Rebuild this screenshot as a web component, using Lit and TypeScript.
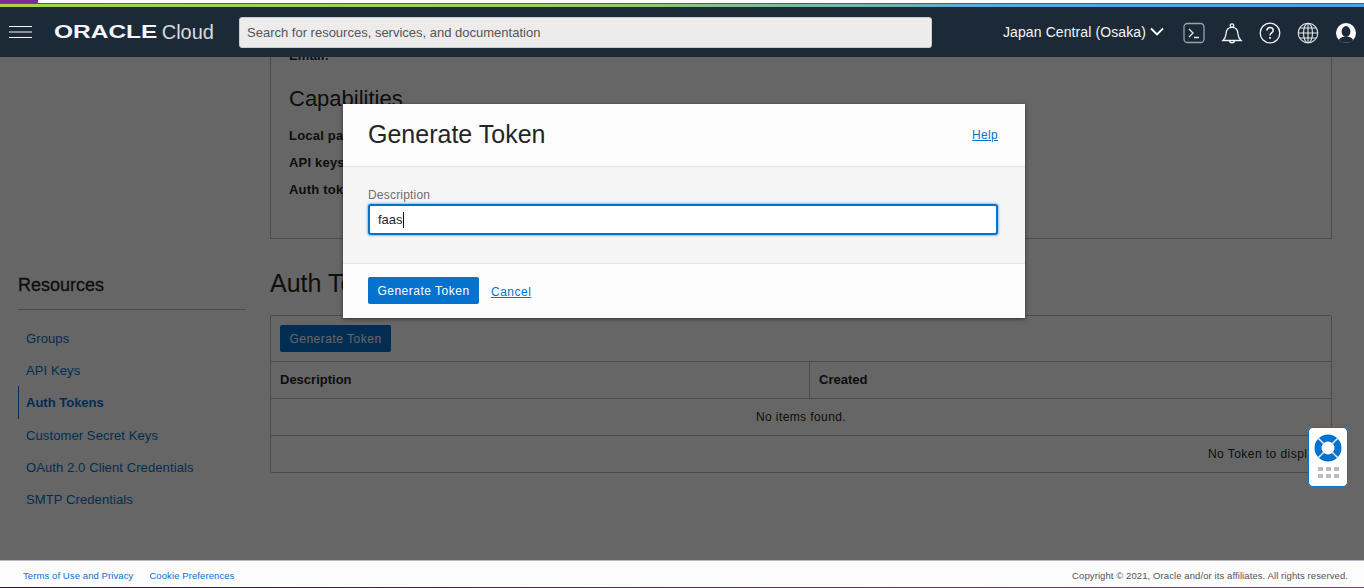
import { css, html, LitElement } from "lit";
import { customElement } from "lit/decorators.js";

const NAV_ITEMS = [
  "Groups",
  "API Keys",
  "Auth Tokens",
  "Customer Secret Keys",
  "OAuth 2.0 Client Credentials",
  "SMTP Credentials",
];

const ACTIVE_ITEM = "Auth Tokens";

@customElement("app-root")
export class AppRoot extends LitElement {
  private _renderHeaderIcons() {
    return html`
      <svg class="icon" viewBox="0 0 22 22" width="22" height="22" fill="none" stroke="#e4e6e8" stroke-width="1.3">
        <rect x="1" y="1.5" width="20" height="19" rx="3.5" stroke="#9aa2aa"></rect>
        <path d="M6 7l4 4-4 4M11 15.5h5"></path>
      </svg>
      <svg class="icon" viewBox="0 0 22 22" width="22" height="22" fill="none" stroke="#f2f3f4" stroke-width="1.3">
        <path d="M2 18.5c2-1.8 2.8-3.5 3-6.5.2-4 2-6.6 6-6.6s5.800 2.600 6 6.600c.2 3 1 4.700 3 6.500z"></path>
        <circle cx="11" cy="3.600" r="1.800"></circle>
        <path d="M8.500 18.500c0 3 5 3 5 0"></path>
      </svg>
      <svg class="icon" viewBox="0 0 22 22" width="22" height="22" fill="none" stroke="#f2f3f4" stroke-width="1.300">
        <circle cx="11" cy="11" r="9.800"></circle>
        <path d="M8 8.500c0-4 6.200-4 6.200-.2 0 2.700-3.200 2.500-3.200 5.200" stroke-width="1.600"></path>
        <path d="M11 15v1.800" stroke-width="1.800"></path>
      </svg>
      <svg class="icon" viewBox="0 0 22 22" width="22" height="22" fill="none" stroke="#e4e6e8" stroke-width="1.100">
        <circle cx="11" cy="11" r="9.800"></circle>
        <ellipse cx="11" cy="11" rx="4.500" ry="9.800"></ellipse>
        <path d="M11 1.200v19.600M1.200 11h19.600M2.600 6h16.800M2.600 16h16.800"></path>
      </svg>
      <svg class="icon" viewBox="0 0 22 22" width="22" height="22">
        <circle cx="11" cy="11" r="10" fill="#fff"></circle>
        <ellipse cx="11" cy="9.500" rx="4.400" ry="5.400" fill="#1c2a38"></ellipse>
        <path d="M3.800 18c1.500-2.700 4-3.400 7.200-3.400s5.700.7 7.200 3.400c-4 3.800-10.400 3.800-14.400 0z" fill="#1c2a38"></path>
      </svg>
    `;
  }

  render() {
    return html`
      <div class="top-strip"><div class="top-strip-mark"></div></div>
      <div class="top-line"></div>
      <div class="accent-line"></div>

      <header class="header">
        <svg class="menu" viewBox="0 0 23 12" width="23" height="12" stroke="#f4f5f6" stroke-width="1">
          <path d="M0 .5h23M0 6h23M0 11.500h23"></path>
        </svg>
        <div class="logo"><span class="logo-word">ORACLE</span><span class="logo-cloud">Cloud</span></div>
        <input class="search" placeholder="Search for resources, services, and documentation" />
        <div class="region">
          Japan Central (Osaka)
          <svg viewBox="0 0 14 9" width="14" height="9" fill="none" stroke="#fff" stroke-width="1.800">
            <path d="M1 1.500l6 6 6-6"></path>
          </svg>
        </div>
        <div class="header-icons">${this._renderHeaderIcons()}</div>
      </header>

      <main class="main">
        <aside class="sidebar">
          <h3 class="side-title">Resources</h3>
          <nav class="nav">
            ${NAV_ITEMS.map(
              (item) =>
                html`<a class="nav-item ${item === ACTIVE_ITEM ? "active" : ""}">${item}</a>`
            )}
          </nav>
        </aside>

        <section class="content">
          <div class="details">
            <div class="field email">Email:</div>
            <h2 class="cap-title">Capabilities</h2>
            <div class="field">Local password: Yes</div>
            <div class="field">API keys: Yes</div>
            <div class="field">Auth tokens: Yes</div>
          </div>

          <h2 class="tokens-title">Auth Tokens</h2>
          <div class="table">
            <div class="toolbar"><button class="btn">Generate Token</button></div>
            <div class="thead">
              <div class="th th-desc">Description</div>
              <div class="th">Created</div>
            </div>
            <div class="empty">No items found.</div>
            <div class="table-foot">No Token to display</div>
          </div>
        </section>

        <div class="scrim"></div>

        <div class="modal">
          <div class="modal-head">
            <h1 class="modal-title">Generate Token</h1>
            <a class="link help">Help</a>
          </div>
          <div class="modal-body">
            <label class="label">Description</label>
            <div class="input"><span>faas</span><i class="caret"></i></div>
          </div>
          <div class="modal-foot">
            <button class="btn">Generate Token</button>
            <a class="link cancel">Cancel</a>
          </div>
        </div>

        <div class="help-widget">
          <svg viewBox="0 0 28 28" width="28" height="28">
            <circle cx="14" cy="14" r="10" fill="none" stroke="#0572ce" stroke-width="7"></circle>
            <path d="M4.500 4.500l5 5M23.500 4.500l-5 5M4.500 23.500l5-5M23.500 23.500l-5-5" stroke="#fff" stroke-width="1.400"></path>
          </svg>
          <div class="dots">${Array.from({ length: 6 }, () => html`<i></i>`)}</div>
        </div>
      </main>

      <footer class="footer">
        <a>Terms of Use and Privacy</a>
        <a>Cookie Preferences</a>
        <span class="copy">Copyright © 2021, Oracle and/or its affiliates. All rights reserved.</span>
      </footer>
      <div class="bottom-line"></div>
    `;
  }

  static styles = css`
    :host {
      display: flex;
      flex-direction: column;
      height: 588px;
      overflow: hidden;
      font-family: "Liberation Sans", Arial, sans-serif;
      font-size: 13px;
      color: #252525;
      background: #fff;
    }

    .top-strip {
      height: 3px;
      background: #fff;
    }

    .top-strip-mark {
      width: 38px;
      height: 3px;
      background: #7b2a9c;
    }

    .top-line {
      height: 1px;
      background: #7d3a96;
    }

    .accent-line {
      height: 3px;
      background: linear-gradient(90deg, #a8d24a 0%, #9ccf5c 40%, #58a8dc 75%, #4f9fe0 100%);
    }

    .header {
      position: relative;
      z-index: 3;
      flex: none;
      display: flex;
      align-items: center;
      height: 50px;
      padding-left: 9px;
      background: #1c2a38;
    }

    .menu {
      flex: none;
    }

    .logo {
      display: flex;
      align-items: center;
      width: 160px;
      margin-left: 22px;
      color: #f4f5f6;
    }

    .logo-word {
      display: inline-block;
      width: 103px;
      font-size: 18px;
      font-weight: 700;
      transform: scaleX(1.360);
      transform-origin: left center;
    }

    .logo-cloud {
      margin-left: 6px;
      font-size: 20px;
      font-weight: 400;
      color: #d8dbde;
    }

    .search {
      flex: none;
      box-sizing: border-box;
      width: 693px;
      height: 31px;
      margin-left: 25px;
      padding: 1px 7px 0;
      border: 1px solid #c9ccd0;
      border-radius: 3px;
      background: #ececec;
      font-family: "Liberation Sans", sans-serif;
      font-size: 13px;
    }

    .search::placeholder {
      color: #555;
      opacity: 1;
    }

    .region {
      display: flex;
      align-items: center;
      gap: 4px;
      margin-left: 71px;
      padding-bottom: 1px;
      font-size: 14px;
      letter-spacing: 0.100px;
      color: #f4f5f6;
    }

    .header-icons {
      display: flex;
      align-items: center;
      gap: 16px;
      margin: 2px 0 0 19px;
    }

    .icon {
      flex: none;
    }

    .main {
      position: relative;
      flex: 1;
      min-height: 0;
      display: flex;
      overflow: hidden;
    }

    .sidebar {
      flex: none;
      width: 227px;
      margin-left: 18px;
      padding-top: 216px;
    }

    .side-title {
      margin: 0;
      padding-bottom: 12px;
      border-bottom: 1px solid #bbb;
      font-size: 18px;
      font-weight: 400;
      line-height: 24px;
      -webkit-text-stroke: 0.3px #252525;
    }

    .nav {
      display: flex;
      flex-direction: column;
      margin-top: 12px;
    }

    .nav-item {
      height: 32.200px;
      padding-left: 7px;
      border-left: 1px solid transparent;
      line-height: 33px;
      color: #0572ce;
      letter-spacing: 0.100px;
    }

    .nav-item.active {
      border-left-color: #0572ce;
      font-weight: 700;
      letter-spacing: 0;
    }

    .content {
      flex: none;
      width: 1062px;
      margin-left: 25px;
    }

    .details {
      box-sizing: border-box;
      height: 194px;
      margin-top: -12px;
      padding: 0 18px;
      border: 1px solid #bbb;
    }

    .field {
      height: 27px;
      font-weight: 700;
      line-height: 27px;
      letter-spacing: 0.200px;
    }

    .email {
      margin-top: -4px;
    }

    .cap-title {
      margin: 15px 0 8px;
      font-size: 22px;
      font-weight: 400;
      line-height: 30px;
    }

    .tokens-title {
      margin: 26px 0 14px;
      font-size: 25px;
      font-weight: 400;
      line-height: 36px;
    }

    .table {
      border: 1px solid #bbb;
      border-radius: 2px;
    }

    .toolbar {
      height: 46px;
      padding: 9px 9px 0;
      box-sizing: border-box;
      border-bottom: 1px solid #bbb;
    }

    .btn {
      box-sizing: border-box;
      height: 27px;
      width: 111px;
      padding: 0;
      border: 0;
      border-radius: 2px;
      background: #0572ce;
      color: #fff;
      font-family: "Liberation Sans", sans-serif;
      font-size: 12px;
      letter-spacing: 0.500px;
    }

    .thead {
      display: grid;
      grid-template-columns: 539px 1fr;
      height: 36px;
      border-bottom: 1px solid #bbb;
    }

    .th {
      padding-left: 9px;
      font-weight: 700;
      line-height: 36px;
    }

    .th-desc {
      border-right: 1px solid #bbb;
    }

    .empty {
      height: 36px;
      border-bottom: 1px solid #bbb;
      text-align: center;
      line-height: 37px;
      font-size: 12px;
      letter-spacing: 0.400px;
    }

    .table-foot {
      height: 36px;
      padding-right: 10px;
      text-align: right;
      line-height: 37px;
      font-size: 12px;
      letter-spacing: 0.450px;
    }

    .scrim {
      position: absolute;
      inset: 0;
      background: rgba(0, 0, 0, 0.6);
    }

    .modal {
      position: absolute;
      left: 343px;
      top: 47px;
      width: 682px;
      box-shadow: 0 1px 4px rgba(0, 0, 0, 0.5);
      background: #fcfcfc;
    }

    .modal-head {
      display: flex;
      align-items: center;
      justify-content: space-between;
      height: 62px;
      padding: 0 27px 0 25px;
      border-bottom: 1px solid #e3e3e3;
    }

    .modal-title {
      margin: 0 0 2px;
      font-size: 25px;
      font-weight: 400;
      color: #252525;
    }

    .link {
      color: #0572ce;
      text-decoration: underline;
      letter-spacing: 0.200px;
    }

    .help {
      font-size: 12px;
      letter-spacing: 0.300px;
    }

    .modal-body {
      box-sizing: border-box;
      height: 97px;
      padding: 21px 27px 0 25px;
      border-bottom: 1px solid #e3e3e3;
      background: #f5f5f5;
    }

    .label {
      display: block;
      height: 16px;
      font-size: 12px;
      line-height: 15px;
      color: #6e6e6e;
      letter-spacing: 0.200px;
    }

    .input {
      box-sizing: border-box;
      display: flex;
      align-items: center;
      height: 31px;
      padding-left: 8px;
      border: 2px solid #0572ce;
      border-radius: 3px;
      box-shadow: 0 0 2px 1px rgba(5, 114, 206, 0.4);
      background: #fff;
      font-size: 13px;
      color: #252525;
    }

    .caret {
      width: 1px;
      height: 16px;
      background: #111;
    }

    .modal-foot {
      display: flex;
      align-items: center;
      gap: 12px;
      height: 54px;
      padding: 0 25px 1px;
      box-sizing: border-box;
    }

    .cancel {
      margin-top: 2px;
      font-size: 12px;
      letter-spacing: 0.500px;
    }

    .help-widget {
      position: absolute;
      left: 1308px;
      top: 370px;
      box-sizing: border-box;
      width: 40px;
      height: 60px;
      padding-top: 6px;
      border: 1px solid #0572ce;
      border-radius: 5px;
      background: #fff;
      display: flex;
      flex-direction: column;
      align-items: center;
    }

    .dots {
      display: grid;
      grid-template-columns: repeat(3, 5px);
      gap: 3px;
      margin-top: 5px;
    }

    .dots i {
      width: 5px;
      height: 4px;
      background: #bcbcbc;
    }

    .footer {
      flex: none;
      box-sizing: border-box;
      display: flex;
      align-items: center;
      height: 27px;
      padding: 2px 16px 0 23px;
      border-top: 1px solid #b4b9c0;
      background: #fcfcfc;
      font-size: 9.500px;
      letter-spacing: 0.090px;
      color: #0572ce;
    }

    .footer a + a {
      margin-left: 16px;
    }

    .copy {
      margin-left: auto;
      color: #555;
    }

    .bottom-line {
      height: 1px;
      background: linear-gradient(90deg, #2d1a2a 0%, #6b4a68 100%);
    }
  `;
}
